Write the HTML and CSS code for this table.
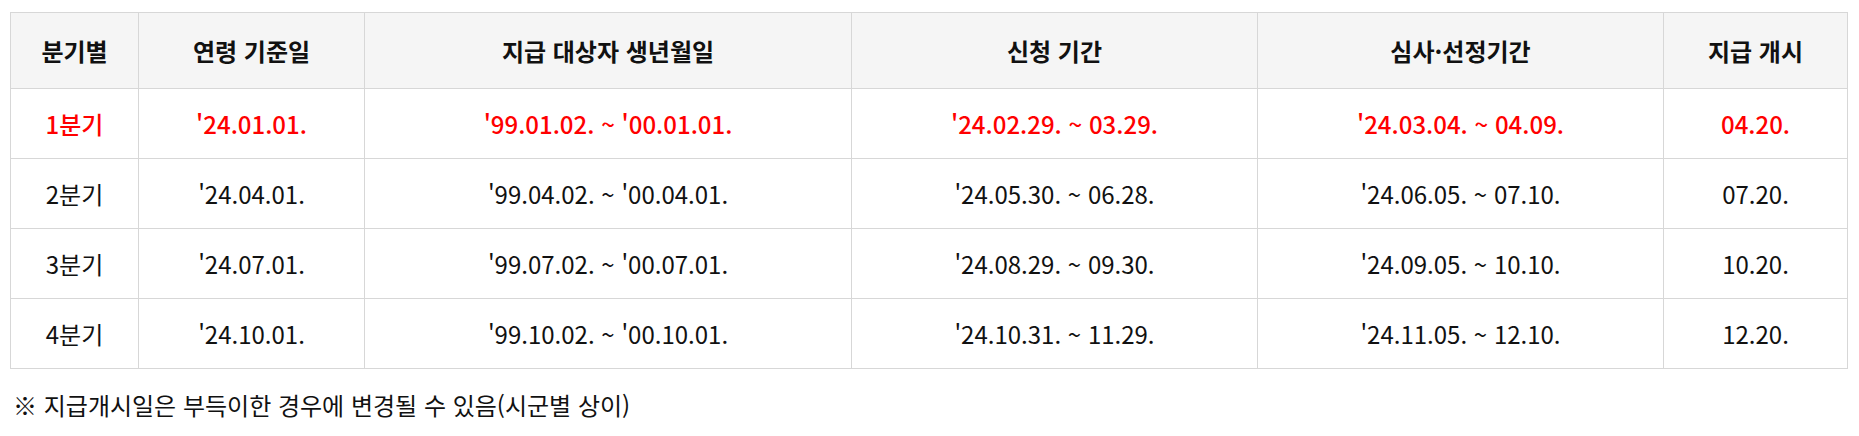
FILE: index.html
```html
<!DOCTYPE html>
<html lang="ko">
<head>
<meta charset="utf-8">
<link rel="stylesheet" href="styles.css">
</head>
<body>
<div class="page">
  <table class="schedule">
    <colgroup>
      <col class="c1"><col class="c2"><col class="c3"><col class="c4"><col class="c5"><col class="c6">
    </colgroup>
    <thead>
      <tr>
        <th>분기별</th>
        <th>연령 기준일</th>
        <th>지급 대상자 생년월일</th>
        <th>신청 기간</th>
        <th>심사·선정기간</th>
        <th>지급 개시</th>
      </tr>
    </thead>
    <tbody>
      <tr class="hl">
        <td>1분기</td>
        <td>'24.01.01.</td>
        <td>'99.01.02. ~ '00.01.01.</td>
        <td>'24.02.29. ~ 03.29.</td>
        <td>'24.03.04. ~ 04.09.</td>
        <td>04.20.</td>
      </tr>
      <tr>
        <td>2분기</td>
        <td>'24.04.01.</td>
        <td>'99.04.02. ~ '00.04.01.</td>
        <td>'24.05.30. ~ 06.28.</td>
        <td>'24.06.05. ~ 07.10.</td>
        <td>07.20.</td>
      </tr>
      <tr>
        <td>3분기</td>
        <td>'24.07.01.</td>
        <td>'99.07.02. ~ '00.07.01.</td>
        <td>'24.08.29. ~ 09.30.</td>
        <td>'24.09.05. ~ 10.10.</td>
        <td>10.20.</td>
      </tr>
      <tr>
        <td>4분기</td>
        <td>'24.10.01.</td>
        <td>'99.10.02. ~ '00.10.01.</td>
        <td>'24.10.31. ~ 11.29.</td>
        <td>'24.11.05. ~ 12.10.</td>
        <td>12.20.</td>
      </tr>
    </tbody>
  </table>
  <p class="note">※ 지급개시일은 부득이한 경우에 변경될 수 있음(시군별 상이)</p>
</div>
</body>
</html>
```
FILE: styles.css
```css
html, body {
  margin: 0;
  padding: 0;
  background: #fff;
}
body {
  font-family: "Noto Sans CJK KR", "Noto Sans", sans-serif;
  color: #111;
}
.page {
  padding: 12px 12px 0 10px;
}
.schedule {
  border-collapse: collapse;
  table-layout: fixed;
  width: 1837px;
  font-size: 24px;
}
.c1 { width: 128px; }
.c2 { width: 226px; }
.c3 { width: 487px; }
.c4 { width: 406px; }
.c5 { width: 406px; }
.c6 { width: 184px; }
.schedule th,
.schedule td {
  border: 1px solid #d7d7d7;
  text-align: center;
  vertical-align: middle;
  padding: 0;
  line-height: 1.3;
}
.schedule th {
  height: 75px;
  background: #f5f5f5;
  font-weight: 700;
  color: #111;
}
.schedule td {
  height: 69px;
  font-weight: 400;
  color: #111;
}
.schedule tr.hl td {
  color: #ff0000;
  font-weight: 500;
}
.note {
  margin: 20px 0 0 3px;
  font-size: 24px;
  line-height: 32px;
  color: #111;
}
```
